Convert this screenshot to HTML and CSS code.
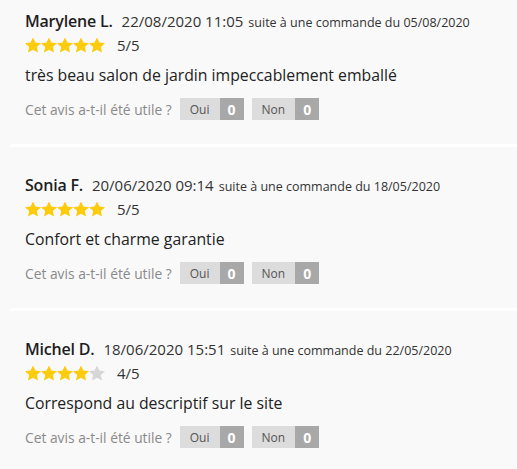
FILE: index.html
```html
<!DOCTYPE html>
<html lang="fr">
<head>
    <meta charset="UTF-8">
    <meta name="viewport" content="width=device-width, initial-scale=1.0">
    <title>Avis clients</title>
    <link rel="stylesheet" href="styles.css">
</head>
<body>
    <div class="reviews">
        <div class="review">
            <div class="review-head">
                <span class="author">Marylene L.</span>
                <span class="date">22/08/2020 11:05</span>
                <span class="order">suite à une commande du 05/08/2020</span>
            </div>
            <div class="rating">
                <span class="stars">
                    <svg viewBox="1.4 1.5 21.2 20.2"><path class="on" d="M12 1.5l3.2 6.9 7.4.8-5.5 5.1 1.5 7.4L12 18l-6.6 3.7 1.5-7.4-5.5-5.1 7.4-.8z"/></svg>
                    <svg viewBox="1.4 1.5 21.2 20.2"><path class="on" d="M12 1.5l3.2 6.9 7.4.8-5.5 5.1 1.5 7.4L12 18l-6.6 3.7 1.5-7.4-5.5-5.1 7.4-.8z"/></svg>
                    <svg viewBox="1.4 1.5 21.2 20.2"><path class="on" d="M12 1.5l3.2 6.9 7.4.8-5.5 5.1 1.5 7.4L12 18l-6.6 3.7 1.5-7.4-5.5-5.1 7.4-.8z"/></svg>
                    <svg viewBox="1.4 1.5 21.2 20.2"><path class="on" d="M12 1.5l3.2 6.9 7.4.8-5.5 5.1 1.5 7.4L12 18l-6.6 3.7 1.5-7.4-5.5-5.1 7.4-.8z"/></svg>
                    <svg viewBox="1.4 1.5 21.2 20.2"><path class="on" d="M12 1.5l3.2 6.9 7.4.8-5.5 5.1 1.5 7.4L12 18l-6.6 3.7 1.5-7.4-5.5-5.1 7.4-.8z"/></svg>
                </span>
                <span class="score">5/5</span>
            </div>
            <p class="comment">très beau salon de jardin impeccablement emballé</p>
            <div class="helpful">
                <span class="question">Cet avis a-t-il été utile ?</span>
                <button class="vote"><span class="label">Oui</span><span class="count">0</span></button>
                <button class="vote"><span class="label">Non</span><span class="count">0</span></button>
            </div>
        </div>

        <div class="review">
            <div class="review-head">
                <span class="author">Sonia F.</span>
                <span class="date">20/06/2020 09:14</span>
                <span class="order">suite à une commande du 18/05/2020</span>
            </div>
            <div class="rating">
                <span class="stars">
                    <svg viewBox="1.4 1.5 21.2 20.2"><path class="on" d="M12 1.5l3.2 6.9 7.4.8-5.5 5.1 1.5 7.4L12 18l-6.6 3.7 1.5-7.4-5.5-5.1 7.4-.8z"/></svg>
                    <svg viewBox="1.4 1.5 21.2 20.2"><path class="on" d="M12 1.5l3.2 6.9 7.4.8-5.5 5.1 1.5 7.4L12 18l-6.6 3.7 1.5-7.4-5.5-5.1 7.4-.8z"/></svg>
                    <svg viewBox="1.4 1.5 21.2 20.2"><path class="on" d="M12 1.5l3.2 6.9 7.4.8-5.5 5.1 1.5 7.4L12 18l-6.6 3.7 1.5-7.4-5.5-5.1 7.4-.8z"/></svg>
                    <svg viewBox="1.4 1.5 21.2 20.2"><path class="on" d="M12 1.5l3.2 6.9 7.4.8-5.5 5.1 1.5 7.4L12 18l-6.6 3.7 1.5-7.4-5.5-5.1 7.4-.8z"/></svg>
                    <svg viewBox="1.4 1.5 21.2 20.2"><path class="on" d="M12 1.5l3.2 6.9 7.4.8-5.5 5.1 1.5 7.4L12 18l-6.6 3.7 1.5-7.4-5.5-5.1 7.4-.8z"/></svg>
                </span>
                <span class="score">5/5</span>
            </div>
            <p class="comment">Confort et charme garantie</p>
            <div class="helpful">
                <span class="question">Cet avis a-t-il été utile ?</span>
                <button class="vote"><span class="label">Oui</span><span class="count">0</span></button>
                <button class="vote"><span class="label">Non</span><span class="count">0</span></button>
            </div>
        </div>

        <div class="review">
            <div class="review-head">
                <span class="author">Michel D.</span>
                <span class="date">18/06/2020 15:51</span>
                <span class="order">suite à une commande du 22/05/2020</span>
            </div>
            <div class="rating">
                <span class="stars">
                    <svg viewBox="1.4 1.5 21.2 20.2"><path class="on" d="M12 1.5l3.2 6.9 7.4.8-5.5 5.1 1.5 7.4L12 18l-6.6 3.7 1.5-7.4-5.5-5.1 7.4-.8z"/></svg>
                    <svg viewBox="1.4 1.5 21.2 20.2"><path class="on" d="M12 1.5l3.2 6.9 7.4.8-5.5 5.1 1.5 7.4L12 18l-6.6 3.7 1.5-7.4-5.5-5.1 7.4-.8z"/></svg>
                    <svg viewBox="1.4 1.5 21.2 20.2"><path class="on" d="M12 1.5l3.2 6.9 7.4.8-5.5 5.1 1.5 7.4L12 18l-6.6 3.7 1.5-7.4-5.5-5.1 7.4-.8z"/></svg>
                    <svg viewBox="1.4 1.5 21.2 20.2"><path class="on" d="M12 1.5l3.2 6.9 7.4.8-5.5 5.1 1.5 7.4L12 18l-6.6 3.7 1.5-7.4-5.5-5.1 7.4-.8z"/></svg>
                    <svg viewBox="1.4 1.5 21.2 20.2"><path class="off" d="M12 1.5l3.2 6.9 7.4.8-5.5 5.1 1.5 7.4L12 18l-6.6 3.7 1.5-7.4-5.5-5.1 7.4-.8z"/></svg>
                </span>
                <span class="score">4/5</span>
            </div>
            <p class="comment">Correspond au descriptif sur le site</p>
            <div class="helpful">
                <span class="question">Cet avis a-t-il été utile ?</span>
                <button class="vote"><span class="label">Oui</span><span class="count">0</span></button>
                <button class="vote"><span class="label">Non</span><span class="count">0</span></button>
            </div>
        </div>
    </div>
</body>
</html>
```

FILE: styles.css
```css
body {
    font-family: "Open Sans", sans-serif;
    background-color: #f9f9f9;
    color: #222;
    margin: 0;
    padding: 0;
}
.reviews {
    padding-left: 10px;
}
.review {
    padding: 10px 0 24px 15px;
    border-bottom: 3px solid #fff;
}
.review + .review {
    padding-top: 27px;
}
.review-head {
    display: flex;
    align-items: baseline;
    white-space: nowrap;
}
.author {
    font-size: 16px;
    font-weight: 600;
    color: #1e1e1e;
    margin-right: 9px;
    letter-spacing: -0.2px;
}
.date {
    font-size: 15px;
    color: #333;
    margin-right: 5px;
}
.order {
    font-size: 12.5px;
    color: #333;
}
.rating {
    display: flex;
    align-items: center;
    margin-top: 3px;
}
.stars {
    display: flex;
}
.stars svg {
    width: 16px;
    height: 16px;
}
.stars .on {
    fill: #fccb0b;
}
.stars .off {
    fill: #d6d6d6;
}
.score {
    font-size: 15px;
    color: #333;
    margin-left: 12px;
}
.comment {
    font-size: 15.8px;
    color: #222;
    margin: 9px 0 0;
}
.helpful {
    display: flex;
    align-items: center;
    margin-top: 12px;
}
.question {
    font-size: 13.8px;
    color: #8a8a8a;
    margin-right: 8px;
}
.vote {
    display: flex;
    height: 22px;
    padding: 0;
    border: none;
    margin-right: 8px;
    font-family: inherit;
    cursor: pointer;
}
.vote .label {
    display: flex;
    align-items: center;
    padding: 0 10px;
    background-color: #dcdcdc;
    color: #555;
    font-size: 12px;
}
.vote .count {
    display: flex;
    align-items: center;
    padding: 0 8px;
    background-color: #a8a8a8;
    color: #fff;
    font-size: 14px;
    font-weight: 700;
}
```
